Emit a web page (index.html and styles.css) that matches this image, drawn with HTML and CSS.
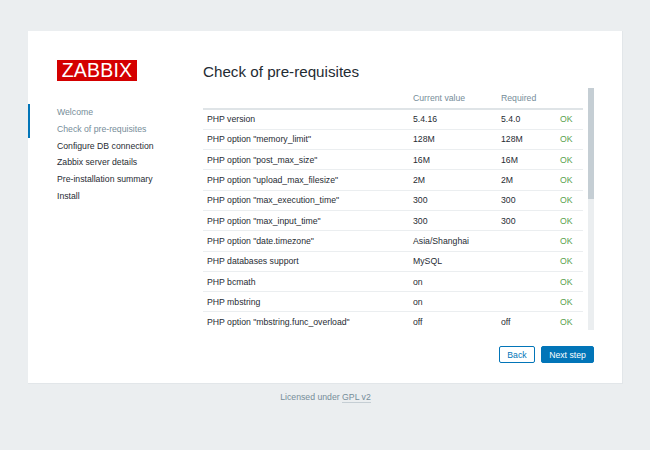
FILE: index.html
```
<!DOCTYPE html>
<html lang="en">
<head>
<meta charset="utf-8">
<title>Zabbix installation</title>
<link rel="stylesheet" href="styles.css">
</head>
<body>
<main class="card">
  <aside class="sidebar">
    <div class="logo">ZABBIX</div>
    <ul class="steps">
      <li class="step done">Welcome</li>
      <li class="step done">Check of pre-requisites</li>
      <li class="step">Configure DB connection</li>
      <li class="step">Zabbix server details</li>
      <li class="step">Pre-installation summary</li>
      <li class="step">Install</li>
    </ul>
  </aside>
  <section class="content">
    <h1 class="title">Check of pre-requisites</h1>
    <div class="scroller">
      <div class="table-wrap">
        <table class="reqs">
          <thead>
            <tr><th class="c-name"></th><th class="c-cur">Current value</th><th class="c-req">Required</th><th class="c-ok"></th></tr>
          </thead>
          <tbody>
            <tr><td>PHP version</td><td>5.4.16</td><td>5.4.0</td><td class="ok">OK</td></tr>
            <tr><td>PHP option "memory_limit"</td><td>128M</td><td>128M</td><td class="ok">OK</td></tr>
            <tr><td>PHP option "post_max_size"</td><td>16M</td><td>16M</td><td class="ok">OK</td></tr>
            <tr><td>PHP option "upload_max_filesize"</td><td>2M</td><td>2M</td><td class="ok">OK</td></tr>
            <tr><td>PHP option "max_execution_time"</td><td>300</td><td>300</td><td class="ok">OK</td></tr>
            <tr><td>PHP option "max_input_time"</td><td>300</td><td>300</td><td class="ok">OK</td></tr>
            <tr><td>PHP option "date.timezone"</td><td>Asia/Shanghai</td><td></td><td class="ok">OK</td></tr>
            <tr><td>PHP databases support</td><td>MySQL</td><td></td><td class="ok">OK</td></tr>
            <tr><td>PHP bcmath</td><td>on</td><td></td><td class="ok">OK</td></tr>
            <tr><td>PHP mbstring</td><td>on</td><td></td><td class="ok">OK</td></tr>
            <tr><td>PHP option "mbstring.func_overload"</td><td>off</td><td>off</td><td class="ok">OK</td></tr>
          </tbody>
        </table>
      </div>
      <div class="scrollbar"><div class="thumb"></div></div>
    </div>
    <div class="actions">
      <button class="btn btn-back">Back</button>
      <button class="btn btn-next">Next step</button>
    </div>
  </section>
</main>
<footer class="footer">Licensed under <span class="license">GPL v2</span></footer>
</body>
</html>
```
FILE: styles.css
```
* { box-sizing: border-box; }
html, body { margin: 0; height: 100%; }
body {
  background: #ebeef0;
  font-family: "Liberation Sans", Arial, sans-serif;
  font-size: 8.7px;
  color: #1f2c33;
  padding: 31px 27px 0 28px;
  overflow: hidden;
}
.card {
  display: flex;
  width: 595px;
  height: 353px;
  background: #fff;
  border: 1px solid #e2e6e9;
  border-width: 0 1px 1px 0;
}
.sidebar { width: 175px; flex: none; padding-top: 29px; }
.logo {
  width: 80px;
  height: 21px;
  margin-left: 29px;
  background: #d40000;
  color: #fff;
  font-size: 19.5px;
  line-height: 21px;
  text-align: center;
  letter-spacing: 0.2px;
}
.steps { list-style: none; margin: 23px 0 0; padding: 0; }
.step {
  height: 16.8px;
  line-height: 16.8px;
  padding-left: 29px;
  border-left: 2px solid transparent;
  margin-left: 0;
  text-indent: -2px;
}
.step.done { color: #768d99; border-left-color: #0275b8; }
.content { flex: 1; padding-top: 31px; min-width: 0; }
.title {
  margin: 0;
  font-size: 15.2px;
  font-weight: 400;
  line-height: 20px;
  color: #1f2c33;
}
.scroller { display: flex; margin-top: 6px; height: 242px; width: 391px; }
.table-wrap { width: 380px; height: 242px; overflow: hidden; flex: none; }
.reqs { width: 100%; border-collapse: collapse; table-layout: fixed; }
.reqs th {
  height: 21px;
  font-weight: 400;
  color: #768d99;
  text-align: left;
  padding: 0 4px;
  border-bottom: 2px solid #dfe4e7;
}
.reqs td {
  height: 20.3px;
  padding: 0 4px;
  border-bottom: 1px solid #ebeef0;
  color: #1f2c33;
}
.c-name { width: 206px; }
.c-cur { width: 88px; }
.c-req { width: 59px; }
.reqs td.ok { color: #59a14f; }
.scrollbar { width: 6px; margin-left: 5px; background: #ebeef0; flex: none; }
.thumb { height: 111px; background: #c5ced4; }
.actions { display: flex; justify-content: flex-end; gap: 6px; width: 391px; margin-top: 16px; }
.btn {
  height: 17px;
  padding: 0;
  border-radius: 2px;
  font: 8.7px "Liberation Sans", Arial, sans-serif;
}
.btn-back { width: 36px; background: #fff; border: 1px solid #0275b8; color: #0275b8; }
.btn-next { width: 53px; background: #0275b8; border: 1px solid #0275b8; color: #fff; }
.footer { margin-top: 8px; text-align: center; color: #768d99; width: 595px; }
.license { border-bottom: 1px solid #c5ced4; }
```
